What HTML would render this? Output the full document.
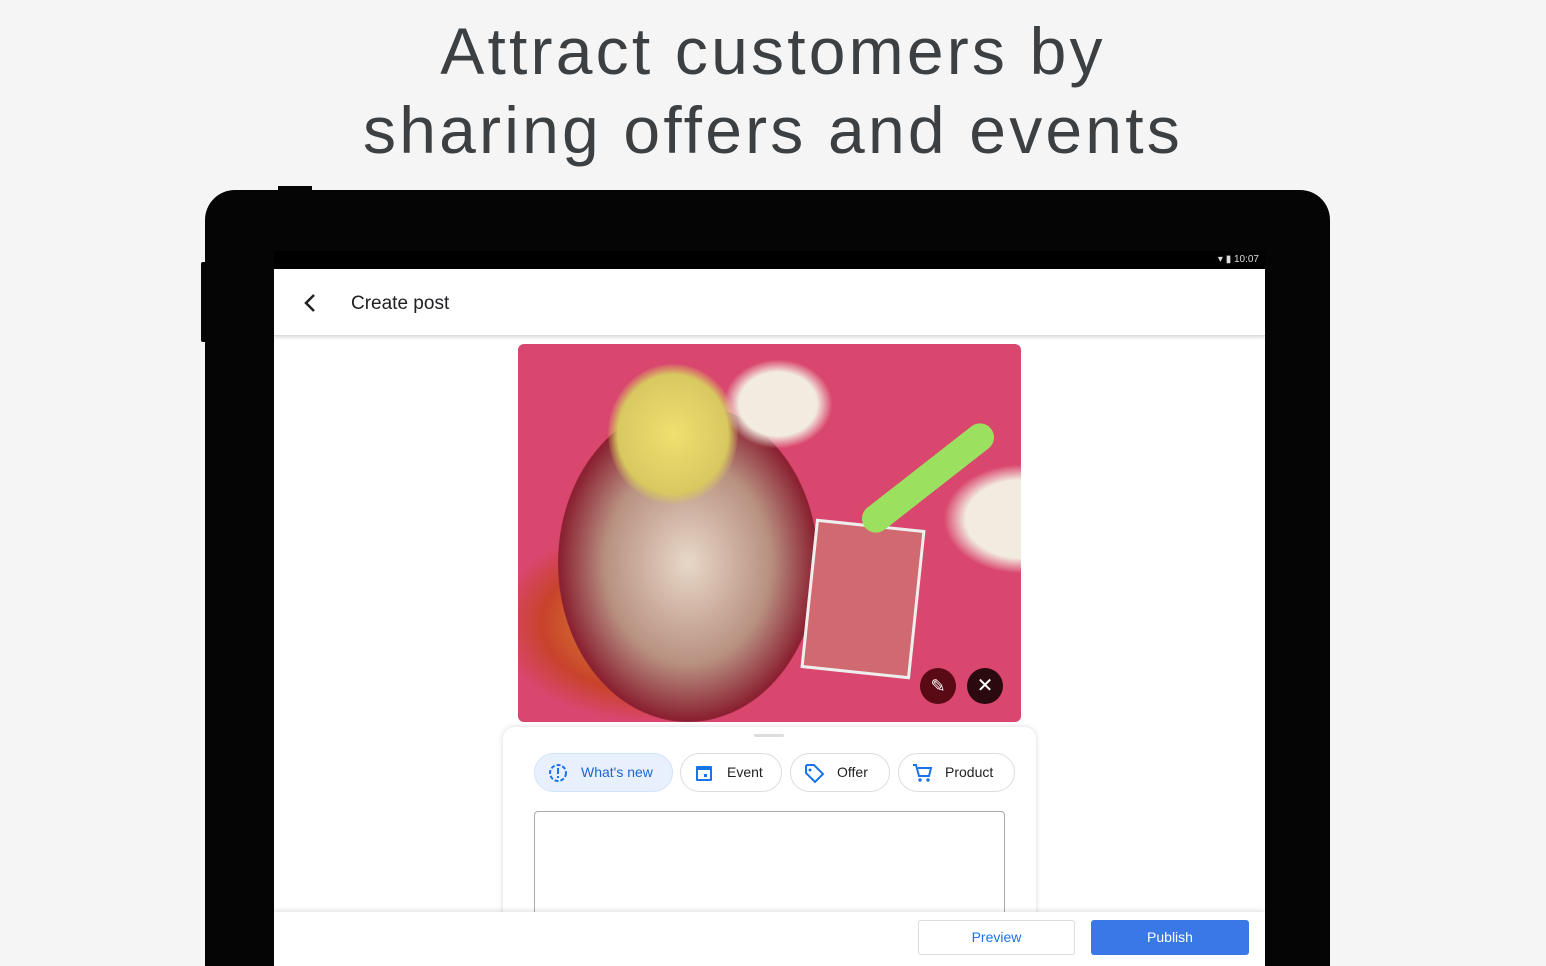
<!DOCTYPE html><html><head><style>
*{margin:0;padding:0;box-sizing:border-box}
html,body{width:1546px;height:966px;overflow:hidden}
body{background:#f5f5f5;font-family:"Liberation Sans",sans-serif;position:relative}
.h{position:absolute;left:0;width:1546px;text-align:center;color:#3c4043;font-size:66px;line-height:79px;top:12px;letter-spacing:3.2px}
.tab{position:absolute;left:205px;top:190px;width:1125px;height:776px;background:#050505;border-radius:30px 30px 0 0}
.btn1{position:absolute;left:278px;top:186px;width:34px;height:6px;background:#050505}
.btn2{position:absolute;left:201px;top:262px;width:6px;height:80px;background:#050505;border-radius:2px}
.scr{position:absolute;left:274px;top:251px;width:991px;height:715px;background:#fff;overflow:hidden}
.sb{height:18px;background:#000;color:#ddd;font-size:10px;text-align:right;padding-right:6px;line-height:17px}
.ab{height:67px;border-bottom:1px solid #ddd;box-shadow:0 2px 3px rgba(0,0,0,.12);position:relative}
.ab span{position:absolute;left:77px;top:24px;font-size:19px;color:#202124}
.img{position:absolute;left:244px;top:93px;width:503px;height:378px;border-radius:6px;overflow:hidden;background:#d9466e}
.sheet{position:absolute;left:229px;top:476px;width:533px;height:239px;background:#fff;border-radius:12px 12px 0 0;box-shadow:0 0 6px rgba(0,0,0,.15)}
.chip{position:absolute;top:26px;height:39px;border:1px solid #dadce0;border-radius:20px;font-size:14px;color:#202124;line-height:37px}
.chip svg{position:absolute;left:12px;top:8px}
.ta{position:absolute;left:31px;top:84px;width:471px;height:120px;border:1px solid #aaa;border-radius:4px}
.bb{position:absolute;left:0;top:661px;width:991px;height:54px;background:#fff;box-shadow:0 -2px 4px rgba(0,0,0,.1)}
.pv{position:absolute;left:644px;top:8px;width:157px;height:35px;border:1px solid #dadce0;border-radius:3px;color:#1a73e8;font-size:14px;text-align:center;line-height:33px}
.pb{position:absolute;left:817px;top:8px;width:158px;height:35px;background:#3b78e7;border-radius:3px;color:#fff;font-size:14px;text-align:center;line-height:35px}
</style></head><body>
<div class="h">Attract customers by<br>sharing offers and events</div>
<div class="btn1"></div><div class="btn2"></div>
<div class="tab"></div>
<div class="scr">
<div class="sb">▾ ▮ 10:07</div>
<div class="ab"><svg style="position:absolute;left:28px;top:24px" width="16" height="20"><path d="M12 2 L4 10 L12 18" stroke="#202124" stroke-width="2.5" fill="none"/></svg><span>Create post</span></div>
<div class="img">
<div style="position:absolute;left:-20px;top:180px;width:300px;height:198px;background:radial-gradient(ellipse,#e0a030 0%,#c8432c 50%,transparent 70%)"></div>
<div style="position:absolute;left:40px;top:60px;width:260px;height:318px;border-radius:50%;background:radial-gradient(ellipse,#e8d8c8 0%,#b89080 45%,#8a2030 70%,transparent 75%)"></div>
<div style="position:absolute;left:90px;top:20px;width:130px;height:140px;border-radius:50%;background:radial-gradient(ellipse,#f0e070 0%,#d8c860 60%,transparent 72%)"></div>
<div style="position:absolute;left:205px;top:15px;width:110px;height:90px;border-radius:50%;background:radial-gradient(ellipse,#f2ece0 50%,transparent 70%)"></div>
<div style="position:absolute;left:425px;top:120px;width:78px;height:110px;border-radius:50% 0 0 50%;background:radial-gradient(ellipse at 100% 50%,#f2ece0 50%,transparent 70%)"></div>
<div style="position:absolute;left:290px;top:180px;width:110px;height:150px;background:#d06a70;transform:rotate(6deg);border:3px solid #eee"></div>
<div style="position:absolute;left:330px;top:120px;width:160px;height:28px;background:#9ce060;transform:rotate(-38deg);border-radius:14px"></div>
<div style="position:absolute;left:402px;top:324px;width:36px;height:36px;border-radius:50%;background:#5a0a14;color:#fff;text-align:center;line-height:36px;font-size:18px">✎</div>
<div style="position:absolute;left:449px;top:324px;width:36px;height:36px;border-radius:50%;background:#2a0a0e;color:#fff;text-align:center;line-height:36px;font-size:20px">✕</div>
</div>
<div class="sheet">
<div style="position:absolute;left:251px;top:7px;width:30px;height:3px;background:#ddd;border-radius:2px"></div>
<div class="chip" style="left:31px;width:139px;background:#e8f0fe;border-color:#d2e3fc;color:#1967d2;padding-left:46px"><svg width="22" height="22" viewBox="0 0 22 22"><circle cx="11" cy="11" r="8" fill="none" stroke="#1a73e8" stroke-width="2" stroke-dasharray="4 2"/><path d="M11 6v6M11 14v2" stroke="#1a73e8" stroke-width="2"/></svg>What's new</div>
<div class="chip" style="left:177px;width:102px;padding-left:46px"><svg width="22" height="22"><rect x="3" y="4" width="16" height="15" rx="1" fill="#1a73e8"/><rect x="5" y="8" width="12" height="9" fill="#fff"/><rect x="11" y="12" width="3" height="3" fill="#1a73e8"/></svg>Event</div>
<div class="chip" style="left:287px;width:100px;padding-left:46px"><svg width="22" height="22"><path d="M3 4v7l9 9 8-8-9-9H4z" fill="none" stroke="#1a73e8" stroke-width="2"/><circle cx="7" cy="8" r="1.5" fill="#1a73e8"/></svg>Offer</div>
<div class="chip" style="left:395px;width:117px;padding-left:46px"><svg width="22" height="22"><path d="M2 3h3l3 11h10l2-8H7" fill="none" stroke="#1a73e8" stroke-width="2"/><circle cx="9" cy="18" r="1.7" fill="#1a73e8"/><circle cx="17" cy="18" r="1.7" fill="#1a73e8"/></svg>Product</div>
<div class="ta" style="height:110px;border-bottom:none;border-radius:4px 4px 0 0"></div>
</div>
<div class="bb"><div class="pv">Preview</div><div class="pb">Publish</div></div>
</div>
</body></html>
